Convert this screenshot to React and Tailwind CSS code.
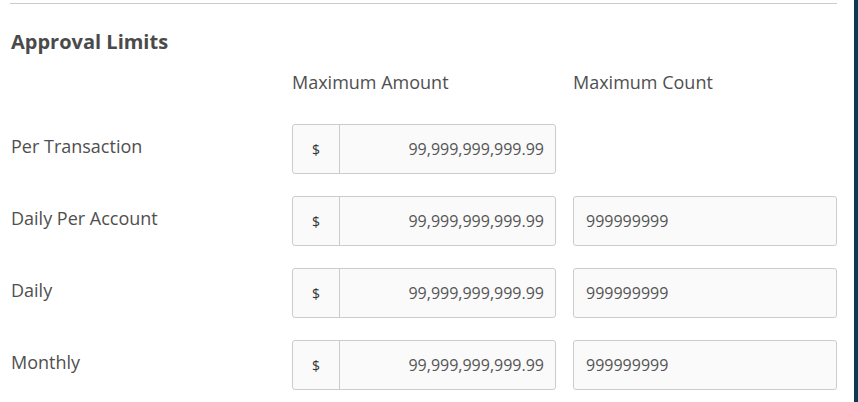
const rows = [
  { label: 'Per Transaction', amount: '99,999,999,999.99', count: null },
  { label: 'Daily Per Account', amount: '99,999,999,999.99', count: '999999999' },
  { label: 'Daily', amount: '99,999,999,999.99', count: '999999999' },
  { label: 'Monthly', amount: '99,999,999,999.99', count: '999999999' },
];

function AmountInput({ value }) {
  return (
    <div className="flex h-[50px] w-[264px] rounded-[3px] border border-[#cccccc] bg-[#fafafa] overflow-hidden">
      <div className="flex w-[47px] shrink-0 items-center justify-center border-r border-[#cccccc] text-[14px] text-[#333]">
        $
      </div>
      <div className="flex flex-1 items-center justify-end pr-[11px] text-[16px] text-[#555]">{value}</div>
    </div>
  );
}

function CountInput({ value }) {
  return (
    <div className="flex h-[50px] w-[264px] items-center rounded-[3px] border border-[#cccccc] bg-[#fafafa] pl-[12px] text-[16px] text-[#555]">
      {value}
    </div>
  );
}

export default function App() {
  return (
    <div
      className="flex h-[402px] w-[858px] bg-white overflow-hidden"
      style={{ fontFamily: "'Open Sans', 'Noto Sans', sans-serif" }}
    >
      <div className="flex-1 pl-[10px] pr-[17px] pt-[3px]">
        <div className="h-px bg-[#cccccc]" />

        {/* Heading */}
        <h2 className="mt-[24px] pl-[1px] text-[20px] font-bold leading-[28px] text-[#4a4a4a]">Approval Limits</h2>

        {/* Column headers */}
        <div className="mt-[14px] grid grid-cols-[265px_264px_264px] gap-x-[17px] text-[18px] font-medium leading-[24px] text-[#4f4f4f]">
          <div />
          <div>Maximum Amount</div>
          <div>Maximum Count</div>
        </div>

        {/* Rows */}
        <div className="mt-[30px] flex flex-col gap-[22px]">
          {rows.map((r) => (
            <div key={r.label} className="grid grid-cols-[265px_264px_264px] gap-x-[17px]">
              <div className="pl-[1px] pt-[10px] text-[18px] font-medium leading-[24px] text-[#4f4f4f]">{r.label}</div>
              <AmountInput value={r.amount} />
              {r.count ? <CountInput value={r.count} /> : <div />}
            </div>
          ))}
        </div>
      </div>

      {/* Edge of neighbouring panel */}
      <div className="w-[5px] shrink-0 bg-[#0c3850]" />
    </div>
  );
}
